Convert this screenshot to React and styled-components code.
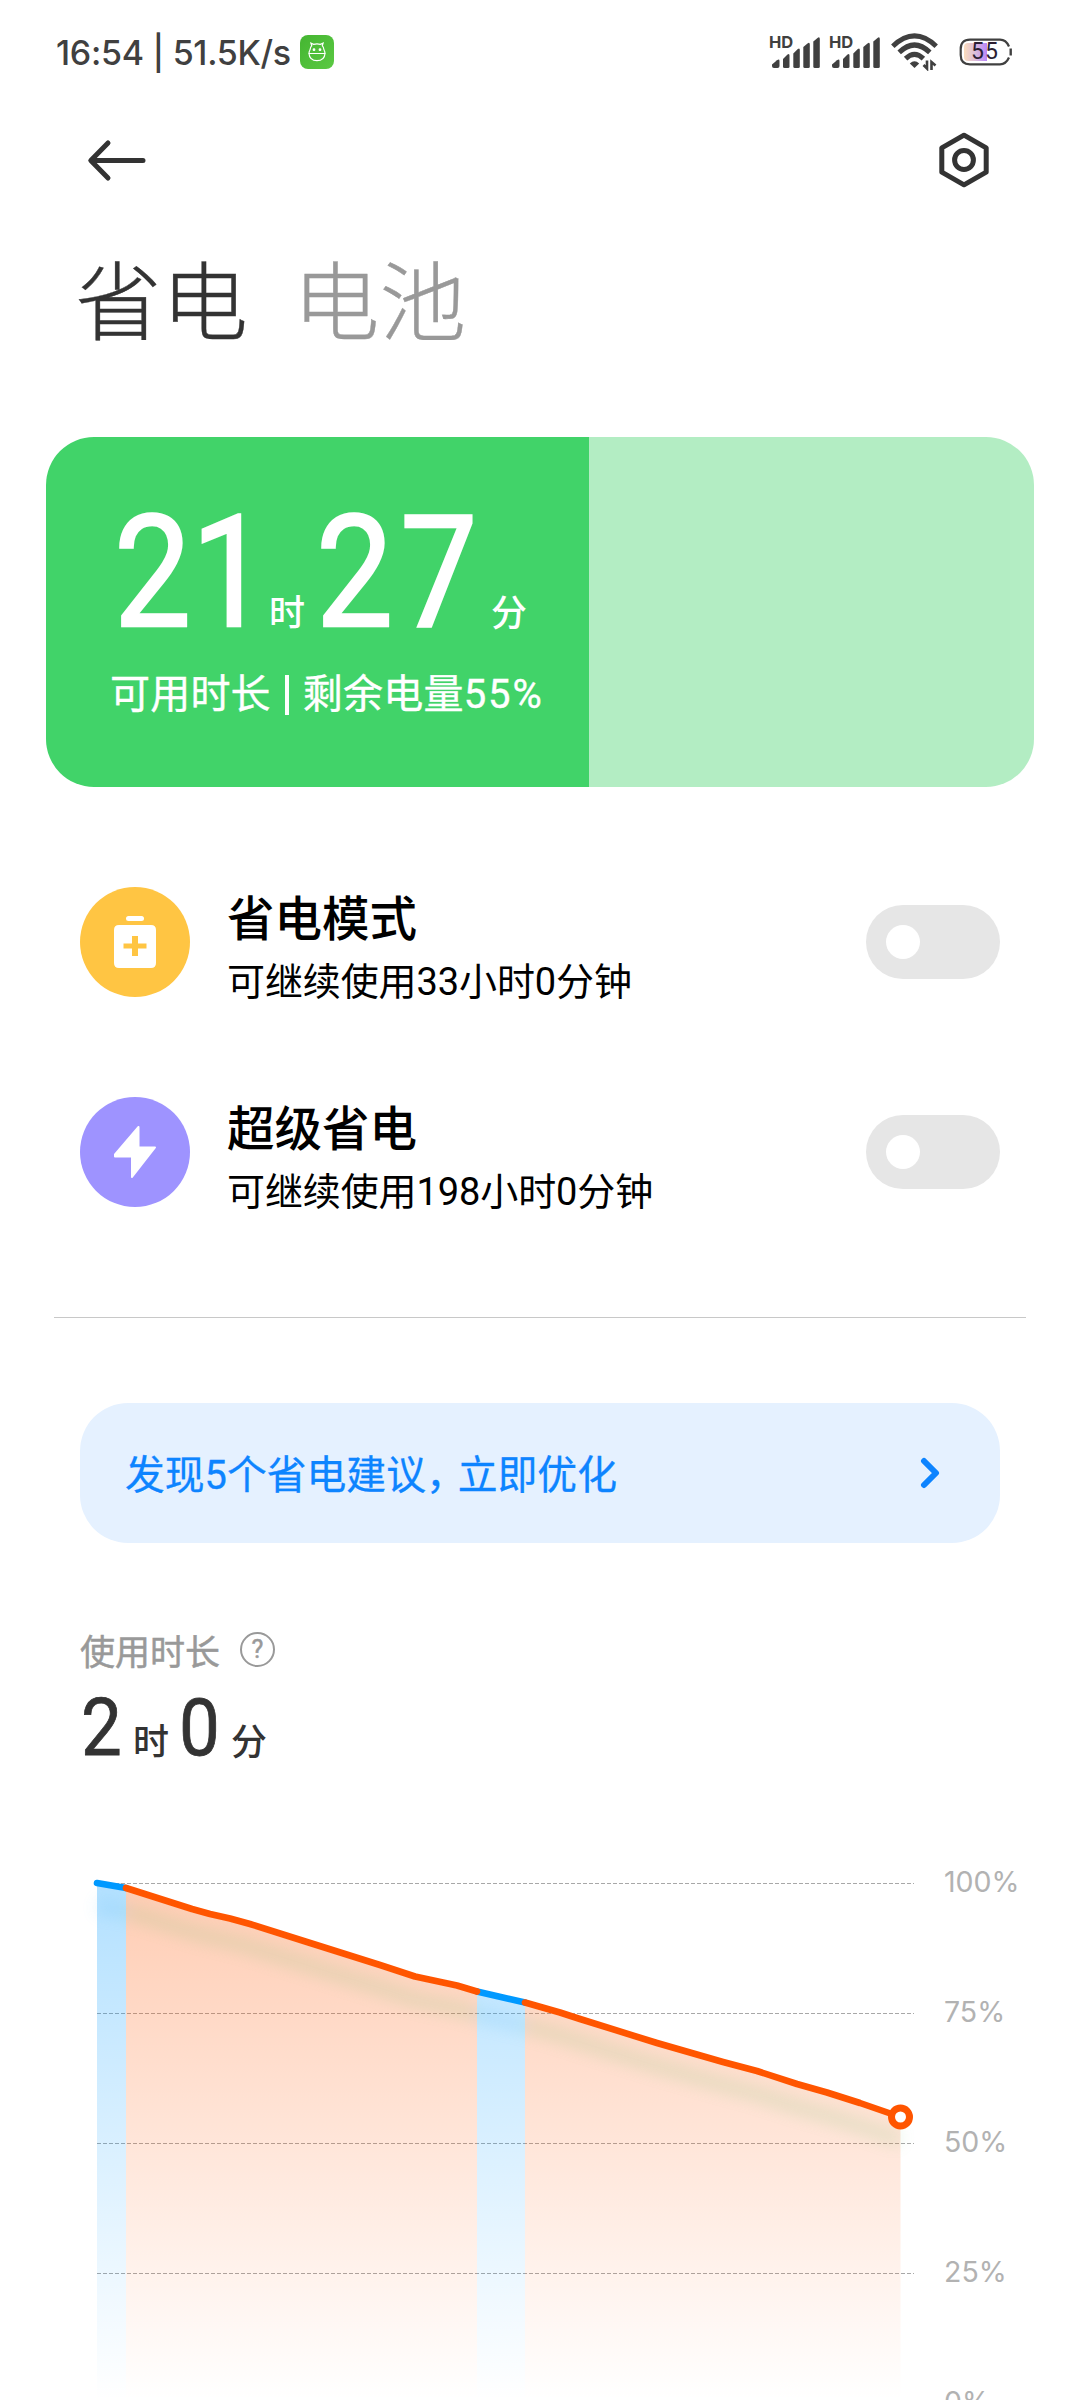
import React from 'react'
import styled, { createGlobalStyle } from 'styled-components';

const modes = [
  { title: '省电模式', desc: '可继续使用33小时0分钟', color: '#ffc543', icon: 'battery' },
  { title: '超级省电', desc: '可继续使用198小时0分钟', color: '#9e93ff', icon: 'bolt' },
]

const levels = ['100%', '75%', '50%', '25%', '0%']

// battery curve, split by screen state
const segments = [
  { type: 'idle', points: [[97, 83], [126, 88]] },
  { type: 'active', points: [[126, 88], [192, 109], [210, 114], [230, 118.5], [250, 124], [307, 142], [380, 165], [415, 176.5], [457, 185.5], [477, 191.5]] },
  { type: 'idle', points: [[477, 191.5], [525, 202.5]] },
  { type: 'active', points: [[525, 202.5], [560, 212.5], [580, 219], [657, 243], [723, 262], [757, 271], [797, 284], [827, 292.5], [860, 303], [900.5, 317]] },
]

const lineColor = { idle: '#0099ff', active: '#ff5500' }
const shadowColor = { idle: '#4db4f0', active: '#6cbf6c' }

const toLine = points => points.map(p => p.join(',')).join(' ')

const Signal = () => (
  <SignalBox>
    <HD>HD</HD>
    <svg width='50' height='34' viewBox='0 0 50 34' fill='#404040'>
      <path d='M1 29.5 L6 25.2 Q8.5 23.5 8.5 26 V31 Q8.5 33 6.5 33 H3 Q1 33 1 31Z' />
      <path d='M12 24 L16.5 19.6 Q18.5 18 18.5 20.5 V31.5 Q18.5 33 17 33 H13.5 Q12 33 12 31.5Z' />
      <path d='M22.3 18.5 L26.8 14 Q28.8 12.5 28.8 15 V31.5 Q28.8 33 27.3 33 H23.8 Q22.3 33 22.3 31.5Z' />
      <path d='M32.3 12 L36.8 8.2 Q38.8 7 38.8 9.4 V31.5 Q38.8 33 37.3 33 H33.8 Q32.3 33 32.3 31.5Z' />
      <path d='M42.3 6.5 L46.8 2.7 Q48.8 1.5 48.8 4 V31.5 Q48.8 33 47.3 33 H43.8 Q42.3 33 42.3 31.5Z' />
    </svg>
  </SignalBox>
)

const Wifi = () => (
  <svg width='48' height='38' viewBox='0 0 48 38' fill='none' stroke='#404040'>
    <path d='M1.8 13.2 Q23.5 -7.4 45.2 13.2' strokeWidth='5' />
    <path d='M8.2 19.4 Q23.5 4.6 38.8 19.4' strokeWidth='5' />
    <path d='M14.6 25.6 Q23.5 17 32.4 25.6' strokeWidth='5' />
    <path d='M18.8 30.6 Q23.5 26 28.2 30.6 L23.5 35Z' fill='#404040' stroke='none' />
    <path d='M36 27.5 V35.5 L32.5 32' strokeWidth='2.6' />
    <path d='M40.5 37 V29 L44.5 32.5' strokeWidth='2.6' />
  </svg>
)

const Battery = () => (
  <BatteryBox>
    <svg width='54' height='28' viewBox='0 0 54 28' fill='none'>
      <defs>
        <linearGradient id='charge' x1='0' x2='1'>
          <stop offset='0' stopColor='#fbdcbc' />
          <stop offset='0.5' stopColor='#dcbcda' />
          <stop offset='1' stopColor='#b985fa' />
        </linearGradient>
      </defs>
      <path d='M9 5 H28 V23 H9 Q5 23 5 19 V9 Q5 5 9 5Z' fill='url(#charge)' />
      <path d='M50 8.5 Q47 1.7 41 1.7 H11 Q1.7 1.7 1.7 11 V17 Q1.7 26.3 11 26.3 H41 Q47 26.3 50 19.5' stroke='#404040' strokeWidth='2.2' />
      <path d='M51.7 10.5 V17.5' stroke='#404040' strokeWidth='2.4' />
    </svg>
    <BatteryText>55</BatteryText>
  </BatteryBox>
)

const Robot = () => (
  <svg width='18' height='20' viewBox='0 0 18 20' fill='none' stroke='#fff' strokeWidth='1.2'>
    <path d='M2 8 Q2.5 4.5 3.7 3.7 L2.9 1.2 L5.6 2.4 Q9 1.2 12.4 2.4 L15.1 1.2 L14.3 3.7 Q15.5 4.5 16 8' />
    <path d='M1 11.5 H17 Q16.5 18.6 9 18.6 Q1.5 18.6 1 11.5Z' />
    <path d='M1 11.5 Q1 9.5 2 8 M17 11.5 Q17 9.5 16 8' />
    <circle cx='6' cy='7.7' r='0.8' fill='#fff' />
    <circle cx='12' cy='7.7' r='0.8' fill='#fff' />
  </svg>
)

const ModeIcon = ({ name }) => name === 'battery' ? (
  <svg width='42' height='52' viewBox='0 0 42 52' fill='#fff'>
    <rect x='12' y='0' width='18' height='5' rx='2.5' />
    <path fillRule='evenodd' d='M5 9 H37 Q42 9 42 14 V47 Q42 52 37 52 H5 Q0 52 0 47 V14 Q0 9 5 9Z M18 20 V27.5 H9.5 V32.5 H18 V40 H24 V32.5 H32.5 V27.5 H24 V20Z' />
  </svg>
) : (
  <svg width='42' height='52' viewBox='0 0 42 52' fill='#fff' stroke='#fff' strokeWidth='2' strokeLinejoin='round'>
    <path d='M24.5 1 V21.5 H41 L18 51 V30.5 H1 V28.5Z' />
  </svg>
)

const Chart = () => (
  <svg width='920' height='600' viewBox='0 0 920 600' fill='none'>
    <defs>
      {Object.keys(lineColor).map(type => (
        <linearGradient key={type} id={type} gradientUnits='userSpaceOnUse' x1='0' y1='83' x2='0' y2='600'>
          <stop offset='0' stopColor={lineColor[type]} stopOpacity='0.3' />
          <stop offset='1' stopColor={lineColor[type]} stopOpacity='0' />
        </linearGradient>
      ))}
      <filter id='soft' x='0' y='-100' width='920' height='800' filterUnits='userSpaceOnUse'>
        <feGaussianBlur stdDeviation='8' />
      </filter>
    </defs>
    {[83, 213, 343, 473].map(y => (
      <path key={y} d={`M97 ${y + 0.5} H914`} stroke='#a8a8a8' strokeDasharray='4 2' />
    ))}
    {segments.map(({ type, points }, i) => (
      <polygon key={i} points={`${toLine(points)} ${points[points.length - 1][0]},600 ${points[0][0]},600`} fill={`url(#${type})`} />
    ))}
    <g transform='translate(0 23)' filter='url(#soft)' opacity='0.17' strokeWidth='14'>
      {segments.map(({ type, points }, i) => (
        <polyline key={i} points={toLine(points)} stroke={shadowColor[type]} />
      ))}
    </g>
    {['idle', 'active'].map(kind => segments.filter(s => s.type === kind).map(({ type, points }, i) => (
      <polyline key={kind + i} points={toLine(points)} stroke={lineColor[type]} strokeWidth='6.6' strokeLinecap='round' strokeLinejoin='round' />
    )))}
    <circle cx='900.5' cy='317' r='9' fill='#fff' stroke='#ff5500' strokeWidth='7' />
  </svg>
)

const App = () => {
  return (
    <Page>
      <GlobalStyle />
      <StatusBar>
        <Clock>16:54 | 51.5K/s</Clock>
        <AppBadge><Robot /></AppBadge>
        <StatusIcons>
          <Signal />
          <Signal />
          <Wifi />
          <Battery />
        </StatusIcons>
      </StatusBar>
      <NavBar>
        <svg width='60' height='44' viewBox='0 0 60 44' fill='none' stroke='#333' strokeWidth='5' strokeLinecap='round' strokeLinejoin='round'>
          <path d='M57 22.5 H5 M22 5 L4.8 22.5 L22 40' />
        </svg>
        <svg width='50' height='56' viewBox='0 0 50 56' fill='none' stroke='#333' strokeWidth='5' strokeLinejoin='round'>
          <path d='M25 3.2 L47.2 15.8 V40.2 L25 52.8 L2.8 40.2 V15.8Z' />
          <circle cx='25' cy='28' r='9.4' />
        </svg>
      </NavBar>
      <Tabs>
        <Tab $active>省电</Tab>
        <Tab>电池</Tab>
      </Tabs>
      <BatteryCard>
        <TimeLeft>
          <BigNumber $width={155}>21</BigNumber>
          <Unit $gap={11}>时</Unit>
          <BigNumber $width={175} $spacing={8}>27</BigNumber>
          <Unit>分</Unit>
        </TimeLeft>
        <Remaining>可用时长<Bar />剩余电量<span>55%</span></Remaining>
      </BatteryCard>
      <Modes>
        {modes.map(mode => (
          <Mode key={mode.title}>
            <ModeCircle $color={mode.color}><ModeIcon name={mode.icon} /></ModeCircle>
            <ModeText>
              <h2>{mode.title}</h2>
              <p>{mode.desc}</p>
            </ModeText>
            <Switch><i /></Switch>
          </Mode>
        ))}
      </Modes>
      <Divider />
      <Advice>
        <p>发现5个省电建议<Comma>，</Comma>立即优化</p>
        <svg width='20' height='32' viewBox='0 0 20 32' fill='none' stroke='#0d84ff' strokeWidth='6' strokeLinecap='round' strokeLinejoin='round'>
          <path d='M4 4 L16 16 L4 28' />
        </svg>
      </Advice>
      <Usage>
        <UsageLabel>
          使用时长
          <Help>?</Help>
        </UsageLabel>
        <UsageTime>
          <UsageNumber>2</UsageNumber>
          <Unit $gap={10}>时</Unit>
          <UsageNumber>0</UsageNumber>
          <Unit>分</Unit>
        </UsageTime>
      </Usage>
      <ChartPanel>
        <Chart />
        <Levels>
          {levels.map(level => <span key={level}>{level}</span>)}
        </Levels>
      </ChartPanel>
    </Page>
  );
}

export default App;

const GlobalStyle = createGlobalStyle`
  * {
    box-sizing: border-box;
  }

  body {
    margin: 0;
    background: #fff;
  }

  h2, p {
    margin: 0;
  }

  svg {
    display: block;
    flex-shrink: 0;
  }
`

const Page = styled.div`
  display: flex;
  flex-direction: column;
  width: 1080px;
  height: 2400px;
  overflow: hidden;
  background: #fff;
  color: #000;
  font-family: Roboto, 'Noto Sans CJK SC', sans-serif;
`

const StatusBar = styled.div`
  display: flex;
  align-items: center;
  height: 104px;
  padding: 0 67px 0 56px;
  color: #404040;
`

const Clock = styled.div`
  width: 244px;
  padding-top: 2px;
  font: 500 34px/40px Inter, sans-serif;
  letter-spacing: -0.3px;
  white-space: nowrap;
`

const AppBadge = styled.div`
  display: flex;
  align-items: center;
  justify-content: center;
  width: 34px;
  height: 34px;
  border-radius: 8px;
  background: linear-gradient(135deg, #44b531, #5bc943);
`

const StatusIcons = styled.div`
  display: flex;
  align-items: center;
  margin-left: auto;
`

const SignalBox = styled.div`
  position: relative;
  width: 60px;
`

const HD = styled.span`
  position: absolute;
  top: -1px;
  left: -2px;
  font: 700 16.5px/16px Inter, sans-serif;
`

const BatteryBox = styled.div`
  position: relative;
  margin-left: 20px;
`

const BatteryText = styled.span`
  position: absolute;
  top: 0;
  left: 12px;
  font: 400 23px/28px Roboto, sans-serif;
  letter-spacing: 1px;
  color: #2c1f33;
`

const NavBar = styled.div`
  display: flex;
  align-items: center;
  justify-content: space-between;
  height: 112px;
  padding: 0 91px 0 86px;
`

const Tabs = styled.div`
  display: flex;
  gap: 45px;
  height: 176px;
  padding-left: 75px;
`

const Tab = styled.div`
  font-family: 'Noto Sans CJK SC', sans-serif;
  font-size: 86.5px;
  font-weight: 300;
  line-height: 161px;
  color: ${props => props.$active ? '#333' : '#999'};
  -webkit-text-stroke: 0.4px;
`

const BatteryCard = styled.div`
  height: 350px;
  margin: 45px 46px 0;
  padding: 56px 0 0 64px;
  border-radius: 48px;
  background: linear-gradient(90deg, #41d369 55%, #b3edc3 55%);
  color: #fff;
`

const TimeLeft = styled.div`
  display: flex;
  align-items: baseline;
  height: 160px;
  padding-left: 4px;
  line-height: 160px;
`

const BigNumber = styled.span`
  width: ${props => props.$width}px;
  font-size: 156px;
  letter-spacing: ${props => props.$spacing || 0}px;
  -webkit-text-stroke: 2.4px;
  transform: scaleX(0.88);
  transform-origin: left;
`

const Unit = styled.span`
  margin-right: ${props => props.$gap || 0}px;
  font-size: 36px;
  font-weight: 500;
`

const Remaining = styled.div`
  display: flex;
  align-items: center;
  margin-top: 12px;
  font-size: 40px;
  line-height: 60px;
  letter-spacing: 0.2px;
  -webkit-text-stroke: 0.4px;

  span {
    letter-spacing: 2px;
  }
`

const Bar = styled.i`
  width: 4px;
  height: 40px;
  margin: 0 14px;
  background: #fff;
`

const Modes = styled.div`
  display: flex;
  flex-direction: column;
  gap: 100px;
  padding: 100px 80px 0;
`

const Mode = styled.div`
  display: flex;
  align-items: center;
  height: 110px;
`

const ModeCircle = styled.div`
  display: flex;
  align-items: center;
  justify-content: center;
  width: 110px;
  height: 110px;
  border-radius: 50%;
  background: ${props => props.$color};
`

const ModeText = styled.div`
  flex: 1;
  padding: 18px 0 0 37px;

  h2 {
    font-size: 47.5px;
    font-weight: 500;
    line-height: 62px;
  }

  p {
    font-size: 38px;
    line-height: 63px;
    letter-spacing: -0.1px;
  }
`

const Switch = styled.div`
  display: flex;
  align-items: center;
  width: 134px;
  height: 74px;
  padding-left: 20px;
  border-radius: 37px;
  background: #e6e6e6;

  i {
    width: 34px;
    height: 34px;
    border-radius: 50%;
    background: #fff;
  }
`

const Divider = styled.div`
  height: 1px;
  margin: 110px 54px 0;
  flex-shrink: 0;
  background: #c8c8c8;
`

const Advice = styled.div`
  display: flex;
  align-items: center;
  justify-content: space-between;
  flex-shrink: 0;
  height: 140px;
  margin: 85px 80px 0;
  padding: 0 60px 0 45px;
  border-radius: 48px;
  background: #e5f1ff;
  color: #0d84ff;
  font-size: 39.8px;
  line-height: 60px;
  -webkit-text-stroke: 0.3px;

  p {
    padding-top: 5px;
  }
`

const Comma = styled.span`
  letter-spacing: -8px;
`

const Usage = styled.div`
  padding: 81px 80px 0;
  color: #333;
`

const UsageLabel = styled.div`
  display: flex;
  align-items: center;
  height: 50px;
  font-size: 35px;
  color: #999;
  -webkit-text-stroke: 0.5px;
`

const Help = styled.span`
  width: 35px;
  height: 35px;
  margin-left: 20px;
  border: 2.5px solid #999;
  border-radius: 50%;
  font-size: 25px;
  line-height: 31px;
  text-align: center;
`

const UsageTime = styled.div`
  display: flex;
  align-items: baseline;
  height: 80px;
  margin-top: 14px;
  padding-left: 1px;
  line-height: 80px;
`

const UsageNumber = styled.span`
  width: 52px;
  font-size: 79px;
  -webkit-text-stroke: 0.8px;
  transform: scaleX(0.92);
  transform-origin: left;
`

const ChartPanel = styled.div`
  display: flex;
  height: 600px;
  margin-top: 32px;
  flex-shrink: 0;
`

const Levels = styled.div`
  display: flex;
  flex-direction: column;
  padding: 17px 0 0 24px;
  font: 400 28.5px/130px Inter, sans-serif;
  color: #b2b2b2;
`
